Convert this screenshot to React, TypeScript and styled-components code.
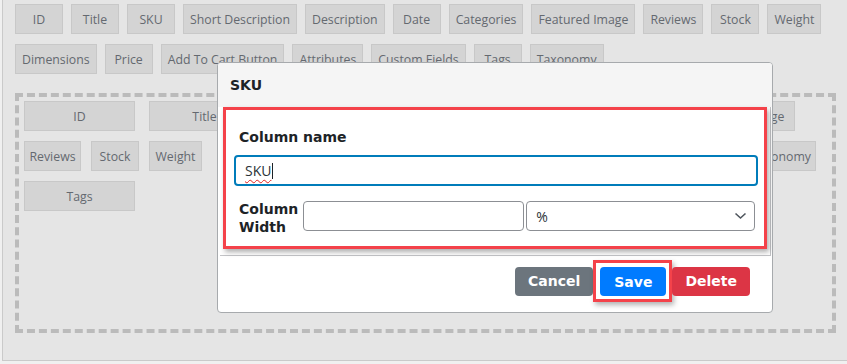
import styled, { createGlobalStyle } from "styled-components";

const GlobalStyle = createGlobalStyle`
  html, body {
    margin: 0;
    padding: 0;
    background: #f0f0f0;
  }
  * {
    box-sizing: border-box;
  }
`;

const Page = styled.div`
  position: relative;
  width: 847px;
  height: 364px;
  overflow: hidden;
`;

const Panel = styled.div`
  margin-left: 2px;
  height: 361px;
  background: #e5e5e5;
  border-left: 1px solid #cacaca;
  border-bottom: 1px solid #cacaca;
  padding: 4px 0 0 12px;
`;

const ChipRow = styled.div<{ $gap?: number }>`
  display: flex;
  gap: ${(p) => p.$gap ?? 8}px;
  margin-bottom: 10px;
`;

const Chip = styled.div<{ $w?: number; $push?: number }>`
  flex: 0 0 auto;
  display: flex;
  align-items: center;
  justify-content: center;
  height: 30px;
  min-width: 48px;
  width: ${(p) => (p.$w ? `${p.$w}px` : "auto")};
  margin-left: ${(p) => p.$push ?? 0}px;
  padding: 0 6px;
  background: #d4d4d4;
  border: 1px solid #c8c8c8;
  color: #646970;
  font-family: "Open Sans", "Noto Sans", sans-serif;
  font-size: 12.3px;
  white-space: nowrap;
  overflow: hidden;
`;

const DropZone = styled.div`
  margin-top: 19px;
  width: 821px;
  height: 240px;
  border: 4px dashed #bbbbbb;
  padding: 4px 5px;
  display: flex;
  flex-direction: column;
  gap: 10px;

  ${ChipRow} {
    margin-bottom: 0;
  }
`;

const Modal = styled.div`
  position: absolute;
  left: 217px;
  top: 62px;
  width: 556px;
  height: 251px;
  background: #ffffff;
  border: 1px solid #a7aaad;
  border-radius: 4px;
  overflow: hidden;
  display: flex;
  flex-direction: column;
`;

const ModalHeader = styled.div`
  height: 44px;
  flex: 0 0 44px;
  display: flex;
  align-items: center;
  padding: 0 12px;
  background: #f5f5f5;
  font-family: "DejaVu Sans", Verdana, sans-serif;
  font-weight: bold;
  font-size: 14px;
  color: #1d2327;
`;

const ModalBody = styled.div`
  margin: 0 1px 0 2px;
  padding: 0 3px 6px 3px;
  border-right: 1px solid #c3c4c7;
  border-bottom: 1px solid #c3c4c7;
`;

const Highlight = styled.div`
  border: 3px solid #f4424a;
  box-shadow: 2px 3px 5px rgba(0, 0, 0, 0.32);
  padding: 19px 6px 10px 8px;
  background: #ffffff;
`;

const Label = styled.label`
  display: block;
  padding-left: 5px;
  font-family: "DejaVu Sans", Verdana, sans-serif;
  font-weight: bold;
  font-size: 14px;
  line-height: 17px;
  color: #1d2327;
`;

const NameLabel = styled(Label)`
  margin-bottom: 9px;
`;

const WidthLabel = styled(Label)`
  flex: 0 0 63px;
  line-height: 18px;
  margin-right: 5px;
`;

const TextField = styled.div`
  display: flex;
  align-items: center;
  height: 31px;
  padding: 0 9px;
  border: 2px solid #007cba;
  border-radius: 4px;
  font-family: "Open Sans", "Noto Sans", sans-serif;
  font-size: 14px;
  color: #2c3338;
`;

const Misspelled = styled.span`
  text-decoration: underline wavy #e02020 1px;
  text-underline-offset: 3px;
`;

const Caret = styled.span`
  display: inline-block;
  width: 1px;
  height: 16px;
  margin-left: 1px;
  background: #1d2327;
`;

const WidthRow = styled.div`
  display: flex;
  align-items: flex-start;
  margin-top: 14px;
`;

const Box = styled.div<{ $w: number }>`
  flex: 0 0 ${(p) => p.$w}px;
  height: 30px;
  margin-top: 1px;
  border: 1px solid #8c8f94;
  border-radius: 4px;
  background: #ffffff;
`;

const SelectBox = styled(Box)`
  margin-left: 2px;
  display: flex;
  align-items: center;
  justify-content: space-between;
  padding: 0 7px 0 9px;
  font-family: "Open Sans", "Noto Sans", sans-serif;
  font-size: 14px;
  color: #2c3338;
`;

const Footer = styled.div`
  flex: 1;
  display: flex;
  justify-content: flex-end;
  align-items: flex-start;
  padding: 4px 22px 0 0;
`;

const Actions = styled.div`
  display: flex;
  align-items: center;
`;

const Button = styled.button<{ $tone: "secondary" | "primary" | "danger"; $pad?: number }>`
  height: 29px;
  padding: 0 ${(p) => p.$pad ?? 13}px;
  border: none;
  border-radius: 4px;
  font-family: "DejaVu Sans", Verdana, sans-serif;
  font-weight: bold;
  font-size: 14px;
  color: #ffffff;
  background: ${(p) =>
    p.$tone === "primary" ? "#007bff" : p.$tone === "danger" ? "#dc3545" : "#6c757d"};
`;

const SaveMark = styled.div`
  padding: 4px 3px 3px 4px;
  border: 3px solid #f4424a;
  box-shadow: 2px 3px 5px rgba(0, 0, 0, 0.3);
`;

const topRow1 = ["ID", "Title", "SKU", "Short Description", "Description", "Date", "Categories", "Featured Image", "Reviews", "Stock", "Weight"];
const topRow2 = ["Dimensions", "Price", "Add To Cart Button", "Attributes", "Custom Fields", "Tags", "Taxonomy"];

type Col = { name: string; w?: number; push?: number };

const zoneRow1: Col[] = [
  { name: "ID", w: 111 },
  { name: "Title", w: 111 },
  { name: "SKU", w: 111 },
  { name: "Short Description", w: 130 },
  { name: "Description", w: 127 },
  { name: "Featured Image", w: 111 },
];

const zoneRow2: Col[] = [
  { name: "Reviews", w: 57 },
  { name: "Stock", w: 48 },
  { name: "Weight", w: 53 },
  { name: "Date", w: 95, push: 10 },
  { name: "Categories", w: 95 },
  { name: "Dimensions", w: 95 },
  { name: "Price", w: 95 },
  { name: "Custom Fields", w: 94 },
  { name: "Taxonomy", w: 70 },
];

const zoneRow3: Col[] = [{ name: "Tags", w: 111 }];

export default function App() {
  return (
    <Page>
      <GlobalStyle />
      <Panel>
        <ChipRow>
          {topRow1.map((c) => (
            <Chip key={c}>{c}</Chip>
          ))}
        </ChipRow>
        <ChipRow>
          {topRow2.map((c) => (
            <Chip key={c}>{c}</Chip>
          ))}
        </ChipRow>
        <DropZone>
          {[zoneRow1, zoneRow2, zoneRow3].map((row, i) => (
            <ChipRow key={i} $gap={i === 0 ? 14 : 10}>
              {row.map((c) => (
                <Chip key={c.name} $w={c.w} $push={c.push}>
                  {c.name}
                </Chip>
              ))}
            </ChipRow>
          ))}
        </DropZone>
      </Panel>

      <Modal>
        <ModalHeader>SKU</ModalHeader>
        <ModalBody>
          <Highlight>
            <NameLabel>Column name</NameLabel>
            <TextField>
              <Misspelled>SKU</Misspelled>
              <Caret />
            </TextField>
            <WidthRow>
              <WidthLabel>Column Width</WidthLabel>
              <Box $w={221} />
              <SelectBox $w={229}>
                <span>%</span>
                <svg width="13" height="8" viewBox="0 0 13 8">
                  <polyline points="1.5,1.5 6.5,6 11.5,1.5" fill="none" stroke="#50575e" strokeWidth="1.6" />
                </svg>
              </SelectBox>
            </WidthRow>
          </Highlight>
        </ModalBody>
        <Footer>
          <Actions>
            <Button $tone="secondary">Cancel</Button>
            <SaveMark>
              <Button $tone="primary" $pad={14}>
                Save
              </Button>
            </SaveMark>
            <Button $tone="danger">Delete</Button>
          </Actions>
        </Footer>
      </Modal>
    </Page>
  );
}
